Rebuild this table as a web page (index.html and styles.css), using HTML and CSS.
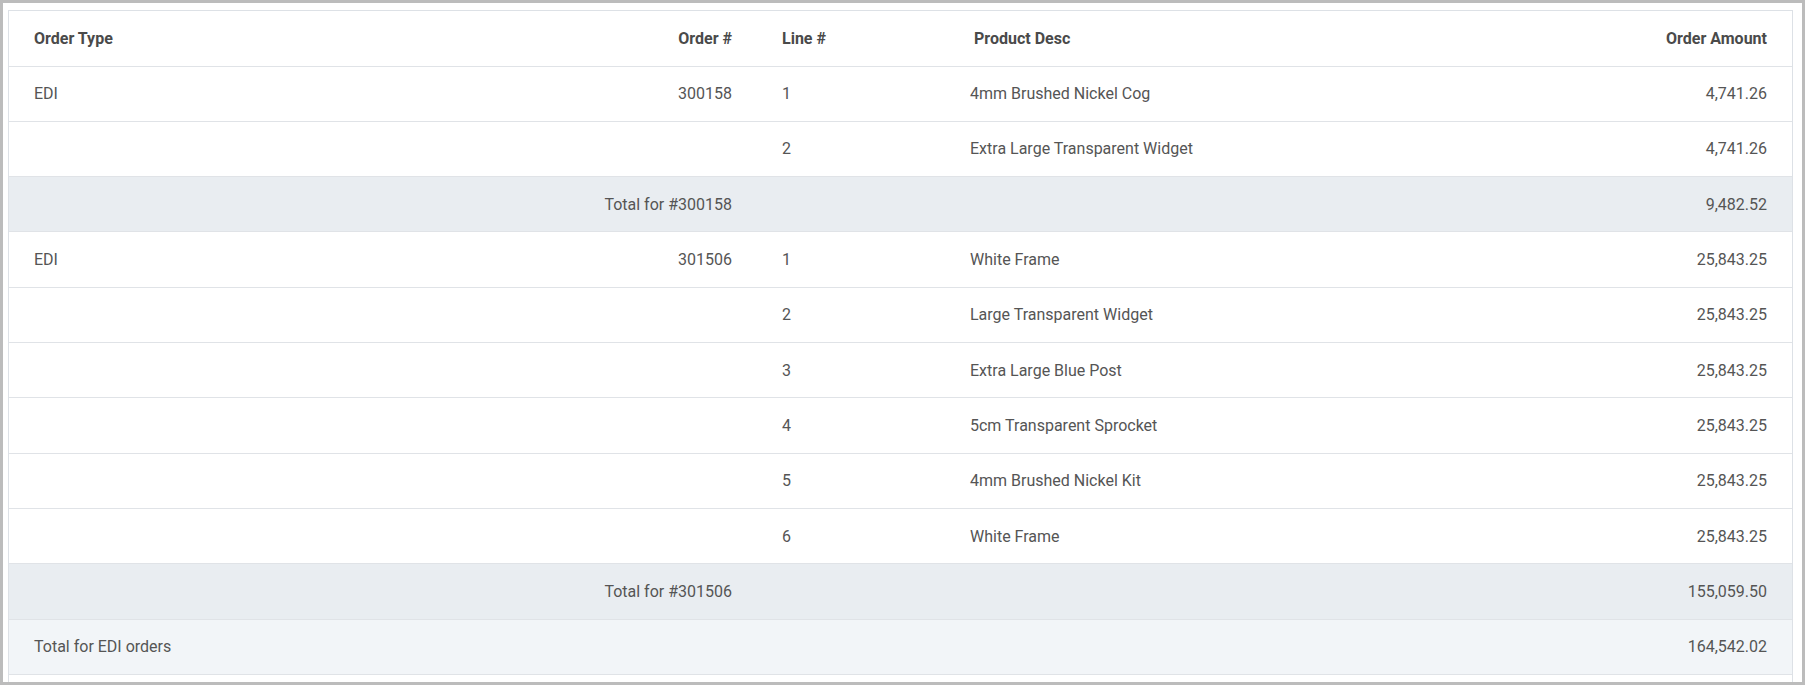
FILE: index.html
```html
<!DOCTYPE html>
<html>
<head>
<meta charset="utf-8">
<link rel="stylesheet" href="styles.css">
</head>
<body>
<div class="frame">
  <div class="grid-wrap">
    <table class="grid">
      <colgroup>
        <col class="c1"><col class="c2"><col class="c3"><col class="c4"><col class="c5">
      </colgroup>
      <thead>
        <tr>
          <th class="left">Order Type</th>
          <th class="right">Order #</th>
          <th class="left">Line #</th>
          <th class="left desc-h">Product Desc</th>
          <th class="right">Order Amount</th>
        </tr>
      </thead>
      <tbody>
        <tr><td>EDI</td><td class="right">300158</td><td>1</td><td>4mm Brushed Nickel Cog</td><td class="right">4,741.26</td></tr>
        <tr><td></td><td></td><td>2</td><td>Extra Large Transparent Widget</td><td class="right">4,741.26</td></tr>
        <tr class="subtotal"><td colspan="2" class="right">Total for #300158</td><td></td><td></td><td class="right">9,482.52</td></tr>
        <tr><td>EDI</td><td class="right">301506</td><td>1</td><td>White Frame</td><td class="right">25,843.25</td></tr>
        <tr><td></td><td></td><td>2</td><td>Large Transparent Widget</td><td class="right">25,843.25</td></tr>
        <tr><td></td><td></td><td>3</td><td>Extra Large Blue Post</td><td class="right">25,843.25</td></tr>
        <tr><td></td><td></td><td>4</td><td>5cm Transparent Sprocket</td><td class="right">25,843.25</td></tr>
        <tr><td></td><td></td><td>5</td><td>4mm Brushed Nickel Kit</td><td class="right">25,843.25</td></tr>
        <tr><td></td><td></td><td>6</td><td>White Frame</td><td class="right">25,843.25</td></tr>
        <tr class="subtotal"><td colspan="2" class="right">Total for #301506</td><td></td><td></td><td class="right">155,059.50</td></tr>
        <tr class="grandtotal"><td colspan="4">Total for EDI orders</td><td class="right">164,542.02</td></tr>
      </tbody>
    </table>
  </div>
</div>
</body>
</html>
```

FILE: styles.css
```css
html, body {
  margin: 0;
  padding: 0;
  background: #ffffff;
}
body {
  font-family: Roboto, "Liberation Sans", Arial, sans-serif;
  color: #555555;
  overflow: hidden;
}
.frame {
  box-sizing: border-box;
  width: 1805px;
  height: 685px;
  border: 3px solid #bcbcbc;
  padding: 7px 9px 0 5px;
  overflow: hidden;
  background: #ffffff;
}
.grid-wrap {
  border: 1px solid #dde1e6;
  height: 700px;
  overflow: hidden;
}
.grid {
  width: 100%;
  border-collapse: collapse;
  table-layout: fixed;
  font-size: 16px;
}
.c1 { width: 374px; }
.c2 { width: 374px; }
.c3 { width: 188px; }
.c4 { width: 424px; }
.c5 { width: auto; }
.grid th,
.grid td {
  height: 55.33px;
  padding: 0 25px;
  border-bottom: 1px solid #e0e3e7;
  text-align: left;
  vertical-align: middle;
  white-space: nowrap;
  box-sizing: border-box;
}
.grid thead th {
  height: 55px;
  font-weight: 700;
  color: #4a4a4a;
}
.grid th.desc-h {
  padding-left: 29px;
}
.grid .right {
  text-align: right;
}
.subtotal td {
  background: #e9edf1;
}
.grandtotal td {
  background: #f2f5f8;
}
```
